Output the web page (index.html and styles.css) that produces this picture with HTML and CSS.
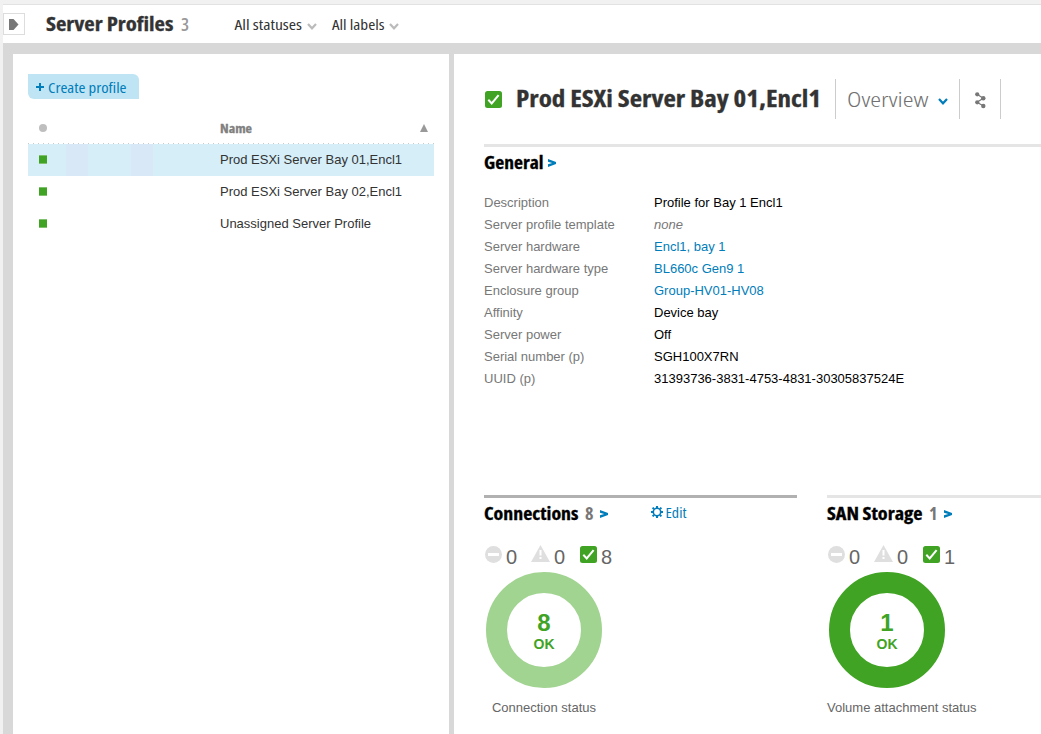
FILE: index.html
```html
<!DOCTYPE html>
<html lang="en">
<head>
<meta charset="utf-8">
<title>Server Profiles</title>
<link rel="stylesheet" href="styles.css">
</head>
<body>
<svg class="defs" width="0" height="0">
  <symbol id="check" viewBox="0 0 17 17"><rect width="17" height="17" rx="2.5" fill="#40a324"/><path d="M3.3 8.8l3.4 3.6L13.6 4.2" fill="none" stroke="#fff" stroke-width="2"/></symbol>
  <symbol id="critical" viewBox="0 0 17 17"><circle cx="8.5" cy="8.5" r="8.5" fill="#dfdfdf"/><rect x="3" y="7" width="11" height="3" fill="#fff"/></symbol>
  <symbol id="warning" viewBox="0 0 19 17"><path d="M9.5 0L19 17H0z" fill="#dfdfdf"/><path d="M8.5 5h2v5.5h-2zM8.5 12h2v2h-2z" fill="#fff"/></symbol>
  <symbol id="more" viewBox="0 0 8 8"><path d="M0 0L8 2.9v2.2L0 8V5.3L4.2 4 0 2.7z" fill="#007dba"/></symbol>
  <symbol id="chevron" viewBox="0 0 10 7"><path d="M1 1l4 4.3L9 1" fill="none" stroke="currentColor" stroke-width="2.2"/></symbol>
</svg>
<div class="app">
  <header class="topbar">
    <button class="toggle" aria-label="Expand"><svg width="10" height="11"><path d="M0 0h4.5L9.5 5.5 4.5 11H0z" fill="#777"/></svg></button>
    <svg class="label heavy page-title" width="128" height="38"><text x="0" y="26" textLength="127.5" lengthAdjust="spacingAndGlyphs">Server Profiles</text></svg>
    <span class="count page-count">3</span>
    <svg class="label filter statuses" width="68" height="38"><text x="0.5" y="25" textLength="67.5" lengthAdjust="spacingAndGlyphs">All statuses</text></svg>
    <svg class="caret" width="10" height="7"><use href="#chevron"/></svg>
    <svg class="label filter labels" width="53" height="38"><text x="0" y="25" textLength="52.5" lengthAdjust="spacingAndGlyphs">All labels</text></svg>
    <svg class="caret" width="10" height="7"><use href="#chevron"/></svg>
  </header>
  <div class="panes">
    <section class="master">
      <button class="create">
        <svg width="9" height="9"><path d="M3 0h2v3h3v2H5v3H3V5H0V3h3z" fill="#007dba"/></svg>
        <svg class="label create-text" width="79" height="25"><text x="0" y="19" textLength="78.5" lengthAdjust="spacingAndGlyphs">Create profile</text></svg>
      </button>
      <div class="thead">
        <span class="dot"></span>
        <svg class="label heavy name" width="33" height="30"><text x="0" y="19" textLength="32" lengthAdjust="spacingAndGlyphs">Name</text></svg>
        <svg class="sort" width="8" height="8"><path d="M4 0l4 8H0z" fill="#999"/></svg>
      </div>
      <div class="row selected"><span class="ok"></span><span>Prod ESXi Server Bay 01,Encl1</span></div>
      <div class="row"><span class="ok"></span><span>Prod ESXi Server Bay 02,Encl1</span></div>
      <div class="row"><span class="ok"></span><span>Unassigned Server Profile</span></div>
    </section>
    <main class="detail">
      <div class="detail-head">
        <svg class="status" width="17" height="17"><use href="#check"/></svg>
        <svg class="label heavy title" width="306" height="40"><text x="0" y="28" textLength="305" lengthAdjust="spacingAndGlyphs">Prod ESXi Server Bay 01,Encl1</text></svg>
        <div class="view">
          <svg class="label overview" width="82" height="40"><text x="0" y="28" textLength="81.5" lengthAdjust="spacingAndGlyphs">Overview</text></svg>
          <svg class="view-caret" width="10" height="7"><use href="#chevron"/></svg>
        </div>
        <div class="share"><svg width="11" height="17"><path d="M2 2.3L8.3 6.3 2 10.3 8.5 14" fill="none" stroke="#777" stroke-width="1.2"/><g fill="#777"><circle cx="2.2" cy="2.3" r="2.1"/><circle cx="8.3" cy="6.3" r="2.2"/><circle cx="2.2" cy="10.3" r="2.1"/><circle cx="8.3" cy="14" r="2.2"/></g></svg></div>
      </div>
      <section class="general">
        <div class="sec-head">
          <svg class="label heavy sec-title" width="60" height="32"><text x="0" y="22" textLength="59.5" lengthAdjust="spacingAndGlyphs">General</text></svg>
          <svg class="more" width="8" height="8"><use href="#more"/></svg>
        </div>
        <dl>
          <dt>Description</dt><dd>Profile for Bay 1 Encl1</dd>
          <dt>Server profile template</dt><dd class="none">none</dd>
          <dt>Server hardware</dt><dd><a>Encl1, bay 1</a></dd>
          <dt>Server hardware type</dt><dd><a>BL660c Gen9 1</a></dd>
          <dt>Enclosure group</dt><dd><a>Group-HV01-HV08</a></dd>
          <dt>Affinity</dt><dd>Device bay</dd>
          <dt>Server power</dt><dd>Off</dd>
          <dt>Serial number (p)</dt><dd>SGH100X7RN</dd>
          <dt>UUID (p)</dt><dd>31393736-3831-4753-4831-30305837524E</dd>
        </dl>
      </section>
      <div class="cards">
        <section class="card active">
          <div class="sec-head">
            <svg class="label heavy sec-title" width="95" height="32"><text x="0" y="22" textLength="94.5" lengthAdjust="spacingAndGlyphs">Connections</text></svg>
            <span class="count sec-count">8</span>
            <svg class="more near" width="8" height="8"><use href="#more"/></svg>
            <svg class="gear" width="12" height="12" viewBox="-6 -6 12 12"><circle r="3.7" fill="none" stroke="#007dba" stroke-width="1.6"/><path d="M0-6v2M0 4v2M-6 0h2M4 0h2M-4.4-4.4l1.4 1.4M3 3l1.4 1.4M-4.4 4.4l1.4-1.4M3-3l1.4-1.4" stroke="#007dba" stroke-width="2"/></svg>
            <svg class="label edit" width="22" height="32"><text x="0.5" y="20" textLength="21" lengthAdjust="spacingAndGlyphs">Edit</text></svg>
          </div>
          <div class="counts">
            <svg class="critical" width="17" height="17"><use href="#critical"/></svg><span>0</span>
            <svg class="warning" width="19" height="17"><use href="#warning"/></svg><span>0</span>
            <svg class="okay" width="17" height="17"><use href="#check"/></svg><span>8</span>
          </div>
          <div class="donut light"><strong>8</strong><b>OK</b></div>
          <p class="centered">Connection status</p>
        </section>
        <section class="card">
          <div class="sec-head">
            <svg class="label heavy sec-title" width="96" height="32"><text x="0" y="22" textLength="95.5" lengthAdjust="spacingAndGlyphs">SAN Storage</text></svg>
            <span class="count sec-count">1</span>
            <svg class="more near" width="8" height="8"><use href="#more"/></svg>
          </div>
          <div class="counts">
            <svg class="critical" width="17" height="17"><use href="#critical"/></svg><span>0</span>
            <svg class="warning" width="19" height="17"><use href="#warning"/></svg><span>0</span>
            <svg class="okay" width="17" height="17"><use href="#check"/></svg><span>1</span>
          </div>
          <div class="donut"><strong>1</strong><b>OK</b></div>
          <p>Volume attachment status</p>
        </section>
      </div>
    </main>
  </div>
</div>
</body>
</html>
```
FILE: styles.css
```css
* { box-sizing: border-box; }
body { margin: 0; background: #f1f1f1; font: 13px/22px "Liberation Sans", Arial, sans-serif; color: #333; overflow: hidden; }
svg { display: block; flex: none; }
.defs { position: absolute; }
button { border: 0; padding: 0; background: none; }
.app { height: 734px; padding: 4px 0 0 3px; display: flex; flex-direction: column; }
.label, .count { font-family: "Open Sans", "Noto Sans", sans-serif; font-stretch: 80%; overflow: visible; }
.label text { fill: currentColor; }
.heavy text { stroke: currentColor; stroke-width: 0.3px; }
.count { flex: none; font-size: 18px; font-weight: 700; line-height: 24px; }

.topbar { height: 39px; flex: none; border-top: 1px solid #e2e2e2; background: #fff; display: flex; align-items: flex-start; }
.toggle { width: 22px; height: 22px; margin-top: 8px; border: 1px solid #ddd; display: flex; align-items: center; padding-left: 5px; }
.page-title { margin-left: 21px; font-size: 20px; font-weight: 700; }
.page-count { width: 11px; margin: 7px 0 0 7px; font-weight: 600; color: #999; }
.filter { font-size: 14.5px; }
.statuses { margin-left: 42px; }
.labels { margin-left: 15px; }
.caret { margin: 18px 0 0 5px; color: #bbb; }
.labels + .caret { margin-left: 4px; }

.panes { flex: 1; display: flex; gap: 5px; padding: 11px 0 0 10px; background: #d8d8d8; min-height: 0; }
.master { width: 436px; background: #fff; padding: 20px 15px 0; }
.create { width: 111px; height: 25px; background: #bfe4f3; border-radius: 0 6px 0 6px; display: flex; padding-left: 8px; color: #007dba; }
.create svg:first-child { margin-top: 9px; }
.create-text { margin-left: 3px; font-size: 14.5px; }
.thead { height: 45px; padding: 15px 6px 0 11px; display: flex; background: repeating-linear-gradient(90deg, #c3ccd0 0 1px, #fff 1px 5px) bottom / 100% 1px no-repeat; }
.dot { width: 8px; height: 8px; margin-top: 10px; border-radius: 50%; background: #bebebe; }
.name { margin-left: 173px; font-size: 12.5px; font-weight: 700; color: #808080; }
.sort { margin: 10px 0 0 auto; }
.row { width: 406px; height: 32px; padding-left: 11px; display: flex; align-items: center; gap: 173px; }
.selected { background: linear-gradient(90deg, transparent 38px, #d8e8f7 38px 60px, transparent 60px 103px, #d8e8f7 103px 125px, transparent 125px) #d5eef8; }
.ok { width: 8px; height: 9px; margin-bottom: 1px; background: #40a324; border: solid #7fc16d; border-width: 1px 0; }

.detail { flex: 1; min-width: 0; overflow: hidden; background: #fff; padding-left: 30px; }
.detail-head { height: 90px; padding-top: 25px; display: flex; }
.status { margin: 12px 0 0 1px; }
.title { margin-left: 14px; font-size: 23.5px; font-weight: 700; }
.view { width: 125px; height: 40px; margin-left: 13px; padding-left: 11px; border: solid #ccc; border-width: 0 1px; display: flex; }
.overview { font-size: 20.5px; font-weight: 300; color: #707070; }
.view-caret { margin: 19px 0 0 9px; color: #007dba; }
.share { width: 41px; height: 40px; border-right: 1px solid #ccc; padding: 13px 0 0 15px; }
.general { height: 351px; border-top: 3px solid #e5e5e5; }
.sec-head { height: 32px; display: flex; color: #000; }
.sec-title { font-size: 17.5px; font-weight: 700; }
.more { margin: 12px 0 0 4px; }
.sec-count { width: 11px; margin: 3px 0 0 6px; color: #777; }
.more.near { margin-left: 4px; }
.gear { margin: 8px 0 0 43px; }
.edit { margin-left: 2px; font-size: 14px; color: #007dba; }
dl { margin: 13px 0 0; display: grid; grid-template-columns: 170px 1fr; grid-auto-rows: 22px; }
dt { color: #777; }
dd { margin: 0; color: #000; }
dd a { color: #007dba; }
dd.none { font-style: italic; color: #777; }
.cards { display: grid; grid-template-columns: 313px 1fr; gap: 30px; }
.card { min-width: 0; border-top: 3px solid #e5e5e5; }
.card.active { border-color: #b1b1b1; }
.counts { height: 42px; padding-top: 16px; display: flex; font-size: 20px; line-height: 20px; color: #666; }
.counts span { width: 11px; margin: 1px 0 0 4px; }
.critical { margin-left: 1px; }
.warning { margin: -1px 0 0 14px; }
.okay { margin-left: 15px; }
.donut { width: 116px; height: 116px; margin-left: 2px; border: 21.3px solid #40a324; border-radius: 50%; display: flex; flex-direction: column; align-items: center; color: #40a324; }
.donut.light { border-color: #a1d391; }
.donut strong { margin-top: 18px; font-size: 24px; line-height: 24px; }
.donut b { font-size: 14px; line-height: 18px; }
.card p { margin: 9px 0 0; color: #666; }
.card p.centered { width: 120px; text-align: center; }
```
